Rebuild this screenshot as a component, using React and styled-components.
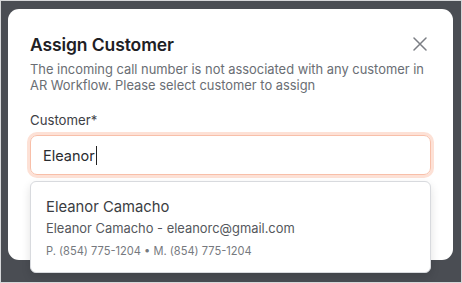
import React from "react";
import styled, { createGlobalStyle } from "styled-components";

const Global = createGlobalStyle`
  html, body { margin: 0; padding: 0; }
  body { font-family: Inter, "Noto Sans", sans-serif; -webkit-font-smoothing: antialiased; }
  * { box-sizing: border-box; }
`;

const Frame = styled.div`
  width: 462px;
  height: 283px;
  background: #4a4d53;
  border: 1px solid #d6d7d9;
  padding: 8px 8px 0 7px;
  overflow: hidden;
`;

const Modal = styled.div`
  position: relative;
  width: 445px;
  height: 251px;
  background: #ffffff;
  border-radius: 11px;
  padding: 23px 22px 0 22px;
  display: flex;
  flex-direction: column;
`;

const Header = styled.div`
  display: flex;
  align-items: center;
  justify-content: space-between;
  height: 24px;
`;

const Title = styled.h2`
  margin: 0;
  font-size: 17.5px;
  font-weight: 600;
  color: #1e2024;
  letter-spacing: -0.1px;
`;

const Close = styled.button`
  border: 0;
  background: none;
  padding: 0;
  margin-right: 3px;
  width: 16px;
  height: 16px;
  display: flex;
  align-items: center;
  justify-content: center;
  color: #7b7e84;
`;

const Description = styled.p`
  margin: 6px 0 0 0;
  font-size: 12.9px;
  line-height: 15.5px;
  color: #6a6e74;
`;

const Label = styled.label`
  margin-top: 19px;
  font-size: 13.2px;
  line-height: 16px;
  color: #3d4045;
`;

const Input = styled.div`
  margin-top: 7px;
  height: 40px;
  border: 1.5px solid #f8bfa9;
  box-shadow: 0 0 0 3px #fde1d6;
  border-radius: 7px;
  display: flex;
  align-items: center;
  padding-left: 12px;
  font-size: 14.5px;
  color: #2a2c30;
`;

const Caret = styled.span`
  display: inline-block;
  width: 1px;
  height: 19px;
  background: #222;
  margin-left: 1px;
`;

const Dropdown = styled.div`
  position: absolute;
  left: 22px;
  top: 172px;
  width: 401px;
  height: 92px;
  background: #fff;
  border: 1px solid #d8dade;
  border-radius: 6px;
  box-shadow: 0 4px 10px rgba(0, 0, 0, 0.12);
  padding: 15px 15px 0 15px;
  display: flex;
  flex-direction: column;
`;

const Name = styled.div`
  font-size: 14.8px;
  line-height: 20px;
  color: #3a3d42;
`;

const Email = styled.div`
  margin-top: 3px;
  font-size: 12.9px;
  line-height: 18px;
  color: #55585d;
`;

const Phone = styled.div`
  margin-top: 5px;
  font-size: 11.1px;
  line-height: 16px;
  color: #76797e;
`;

export default function App() {
  return (
    <>
      <Global />
      <Frame>
        <Modal>
          <Header>
            <Title>Assign Customer</Title>
            <Close aria-label="Close">
              <svg width="14" height="14" viewBox="0 0 14 14" fill="none" stroke="currentColor" strokeWidth="1.5" strokeLinecap="round">
                <path d="M1 1L13 13M13 1L1 13" />
              </svg>
            </Close>
          </Header>
          <Description>
            The incoming call number is not associated with any customer in AR Workflow. Please select customer to assign
          </Description>
          <Label>Customer*</Label>
          <Input>
            Eleanor<Caret />
          </Input>
          <Dropdown>
            <Name>Eleanor Camacho</Name>
            <Email>Eleanor Camacho - eleanorc@gmail.com</Email>
            <Phone>P. (854) 775-1204 • M. (854) 775-1204</Phone>
          </Dropdown>
        </Modal>
      </Frame>
    </>
  );
}
